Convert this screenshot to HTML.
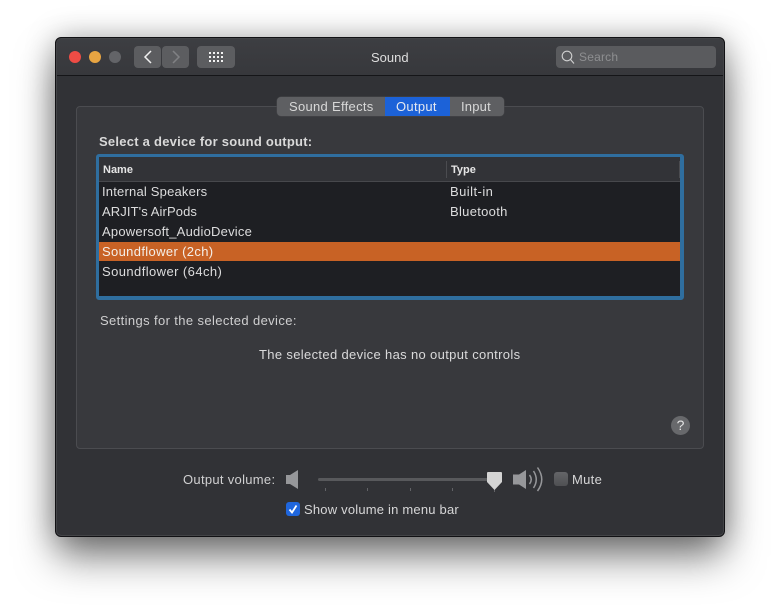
<!DOCTYPE html>
<html><head><meta charset="utf-8"><style>
html,body{margin:0;padding:0;background:#fff;width:780px;height:610px;overflow:hidden}
body{position:relative;font-family:"Liberation Sans",sans-serif;font-size:13px;color:#d6d6d7}
.a{position:absolute;white-space:nowrap}
#win{position:absolute;left:55px;top:37px;width:670px;height:500px;box-sizing:border-box;border-radius:6px;background:#313236;border:1px solid #111114;box-shadow:inset 0 0 0 1px #434447,inset 0 -1px 0 #5c5d60,0 0 30px rgba(0,0,0,.28),0 22px 40px -2px rgba(0,0,0,.5)}
.t{position:absolute;white-space:nowrap;line-height:16px}
.btn{position:absolute;background:#5c5d60;border-radius:4px}
.dot{position:absolute;width:12px;height:12px;border-radius:50%;top:51px}
.row{left:102px;color:#dcdcdd}
</style></head><body>
<div id="win"></div>
<div class="a" style="left:57px;top:39px;width:666px;height:36px;background:linear-gradient(#3d3e42,#37383c);border-bottom:1px solid #151518;border-radius:4px 4px 0 0"></div>
<div class="dot" style="left:69px;background:#ee4c45"></div>
<div class="dot" style="left:89px;background:#e8a542"></div>
<div class="dot" style="left:109px;background:#636468"></div>
<div class="btn" style="left:134px;top:46px;width:27px;height:22px"></div>
<div class="btn" style="left:162px;top:46px;width:27px;height:22px"></div>
<div class="btn" style="left:197px;top:46px;width:38px;height:22px"></div>
<svg class="a" style="left:134px;top:46px" width="102" height="22" fill="none" stroke-width="1.5">
<path d="M17 5 L11 11 L17 17" stroke="#f0f0f0"/><path d="M39 5 L45 11 L39 17" stroke="#808184"/>
<g fill="#f2f2f2" stroke="none"><rect x="75" y="6" width="2" height="2"/><rect x="79" y="6" width="2" height="2"/><rect x="83" y="6" width="2" height="2"/><rect x="87" y="6" width="2" height="2"/>
<rect x="75" y="10" width="2" height="2"/><rect x="79" y="10" width="2" height="2"/><rect x="83" y="10" width="2" height="2"/><rect x="87" y="10" width="2" height="2"/>
<rect x="75" y="14" width="2" height="2"/><rect x="79" y="14" width="2" height="2"/><rect x="83" y="14" width="2" height="2"/><rect x="87" y="14" width="2" height="2"/></g></svg>
<div class="t" style="left:371px;top:50px;color:#dedede">Sound</div>
<div class="btn" style="left:556px;top:46px;width:160px;height:22px;background:#5a5b5e"></div>
<svg class="a" style="left:556px;top:46px" width="22" height="22" fill="none" stroke="#d0d0d0" stroke-width="1.1"><circle cx="11" cy="10" r="4.8"/><path d="M14.500 13.500 L18 17.500"/></svg>
<div class="t" style="left:579px;top:49px;color:#8e8f91;font-size:12px;letter-spacing:.2px">Search</div>

<div class="a" style="left:76px;top:106px;width:626px;height:341px;border:1px solid #4b4c50;border-radius:4px;background:#38393d"></div>
<div class="a" style="left:277px;top:97px;width:227px;height:19px;background:#5e5f62;border-radius:4px;box-shadow:0 0 0 .5px #47484b"></div>
<div class="a" style="left:385px;top:97px;width:65px;height:19px;background:#1c62d8"></div>
<div class="t" style="left:289px;top:99px;font-size:13px;letter-spacing:.3px;color:#d8d8d8">Sound Effects</div>
<div class="t" style="left:396px;top:99px;color:#e6e9f0;letter-spacing:.3px">Output</div>
<div class="t" style="left:461px;top:99px;color:#d8d8d8;letter-spacing:.2px">Input</div>

<div class="t" style="left:99px;top:134px;font-weight:bold;letter-spacing:.25px;color:#d9d9d9">Select a device for sound output:</div>

<div class="a" style="left:96px;top:154px;width:581px;height:139px;border-style:solid;border-color:#2f6e9f;border-width:3px 4px 4px 3px;border-radius:3px;background:#1e1f23"></div>
<div class="a" style="left:99px;top:157px;width:581px;height:24px;background:#323337;border-bottom:1px solid #47484c"></div>
<div class="a" style="left:446px;top:161px;width:1px;height:17px;background:#4b4c50"></div>
<div class="a" style="left:679px;top:161px;width:1px;height:17px;background:#4b4c50"></div>
<div class="t" style="left:103px;top:162px;font-size:11px;font-weight:bold;color:#e6e6e6">Name</div>
<div class="t" style="left:451px;top:162px;font-size:11px;font-weight:bold;color:#e6e6e6">Type</div>
<div class="a" style="left:99px;top:242px;width:581px;height:19px;background:#c86225"></div>
<div class="t row" style="top:184px;letter-spacing:.2px">Internal Speakers</div>
<div class="t" style="left:450px;top:184px;color:#dcdcdd;letter-spacing:.45px">Built-in</div>
<div class="t row" style="top:204px;letter-spacing:.1px">ARJIT's AirPods</div>
<div class="t" style="left:450px;top:204px;color:#dcdcdd;letter-spacing:.3px">Bluetooth</div>
<div class="t row" style="top:224px;letter-spacing:.22px">Apowersoft_AudioDevice</div>
<div class="t row" style="top:244px;color:#f4efe9;letter-spacing:.35px">Soundflower (2ch)</div>
<div class="t row" style="top:264px;letter-spacing:.42px">Soundflower (64ch)</div>

<div class="t" style="left:100px;top:313px;letter-spacing:.38px;color:#cfcfd0">Settings for the selected device:</div>
<div class="t" style="left:259px;top:347px;letter-spacing:.34px;color:#dadadb">The selected device has no output controls</div>
<div class="a" style="left:671px;top:416px;width:19px;height:19px;border-radius:50%;background:#68696c;color:#e4e4e4;text-align:center;line-height:19px;font-size:14px">?</div>

<div class="t" style="left:183px;top:472px;letter-spacing:.3px;color:#d0d0d1">Output volume:</div>
<svg class="a" style="left:280px;top:465px" width="270" height="32" fill="none">
<path d="M6 10 H10 L18 5 V24 L10 19 H6 Z" fill="#96979a"/>
<rect x="38" y="13" width="176" height="3" rx="1.500" fill="#58595c"/>
<g stroke="#626367"><path d="M45.500 23V26M87.500 23V26M130.500 23V26M172.500 23V26M214.500 23V27"/></g>
<path d="M207 8 Q207 7 208 7 H221 Q222 7 222 8 V17 L214.500 25 L207 17 Z" fill="#d4d4d4"/>
<path d="M233 9.500 H239 L246 5 V24 L239 19.500 H233 Z" fill="#96979a"/>
<g stroke="#96979a" stroke-width="1.500"><path d="M249.500 10 Q253 14.500 249.500 19"/><path d="M253.500 6 Q259 14.500 253.500 23"/><path d="M257.500 2.500 Q266 14.500 257.500 26"/></g>
</svg>
<div class="a" style="left:554px;top:472px;width:14px;height:14px;border-radius:3px;background:linear-gradient(#646568,#4f5053)"></div>
<div class="t" style="left:572px;top:472px;letter-spacing:.3px;color:#d6d6d7">Mute</div>
<div class="a" style="left:286px;top:502px;width:14px;height:14px;border-radius:3px;background:#1f66dd"></div>
<svg class="a" style="left:286px;top:502px" width="14" height="14" fill="none"><path d="M3.500 7.500 L6 10.500 L10.500 3.500" stroke="#fff" stroke-width="1.800"/></svg>
<div class="t" style="left:304px;top:502px;letter-spacing:.2px;color:#d6d6d7">Show volume in menu bar</div>
</body></html>
